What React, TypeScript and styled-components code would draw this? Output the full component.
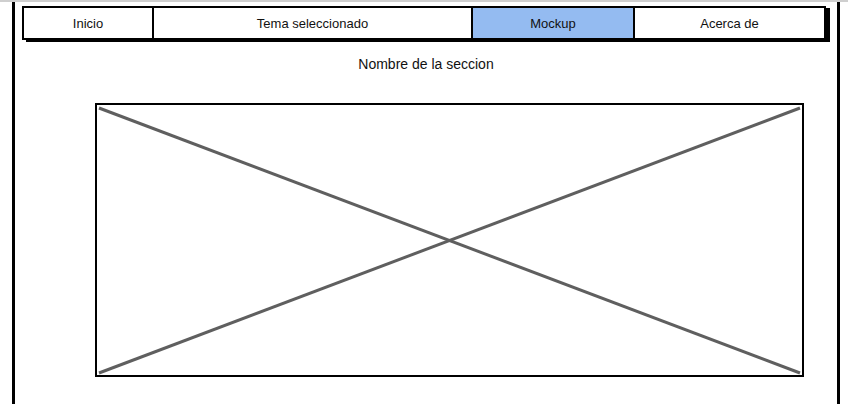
import styled, { createGlobalStyle } from "styled-components";

const GlobalStyle = createGlobalStyle`
  html, body {
    margin: 0;
    padding: 0;
    background: #fff;
  }
  body {
    font-family: "Liberation Sans", Arial, sans-serif;
    color: #111;
  }
`;

// widths include each tab's left divider
const tabs = [
  { label: "Inicio", width: 128 },
  { label: "Tema seleccionado", width: 319 },
  { label: "Mockup", width: 162, active: true },
  { label: "Acerca de", width: 191 },
];

const App = () => {
  return (
    <>
      <GlobalStyle />
      <TopStrip />
      <Page>
        <NavBar>
          {tabs.map((t) => (
            <Tab key={t.label} $active={t.active} $width={t.width}>
              {t.label}
            </Tab>
          ))}
        </NavBar>
        <Title>Nombre de la seccion</Title>
        <ImageBox>
          <svg width="100%" height="100%" viewBox="0 0 705 270" preserveAspectRatio="none">
            <line x1="2" y1="3" x2="703" y2="268" stroke="#5f5f5f" strokeWidth="3" />
            <line x1="2" y1="268" x2="703" y2="3" stroke="#5f5f5f" strokeWidth="3" />
          </svg>
        </ImageBox>
      </Page>
    </>
  );
};

export default App;

const TopStrip = styled.div`
  position: absolute;
  top: 0;
  left: 0;
  width: 100%;
  height: 2px;
  background: #cfcfcf;
`;

const Page = styled.div`
  margin-left: 12px;
  width: 828px;
  height: 404px;
  box-sizing: border-box;
  border-left: 3px solid #000;
  border-right: 3px solid #000;
  padding-top: 6px;
`;

const NavBar = styled.div`
  display: flex;
  margin-left: 7px;
  width: 804px;
  height: 34px;
  box-sizing: border-box;
  border: 2px solid #000;
  box-shadow: 4px 2px 0 #000;
`;

const Tab = styled.div<{ $active?: boolean; $width: number }>`
  flex: 0 0 ${(p) => p.$width}px;
  box-sizing: border-box;
  display: flex;
  align-items: center;
  justify-content: center;
  font-size: 13px;
  background: ${(p) => (p.$active ? "#94bbf1" : "#fff")};
  border-left: 2px solid #000;

  &:first-child {
    border-left: none;
  }
`;

const Title = styled.div`
  text-align: center;
  font-size: 14px;
  margin-top: 16px;
  height: 16px;
  line-height: 16px;
`;

const ImageBox = styled.div`
  margin-top: 31px;
  margin-left: 80px;
  width: 709px;
  height: 274px;
  box-sizing: border-box;
  border: 2px solid #000;
  display: flex;

  svg {
    display: block;
  }
`;
